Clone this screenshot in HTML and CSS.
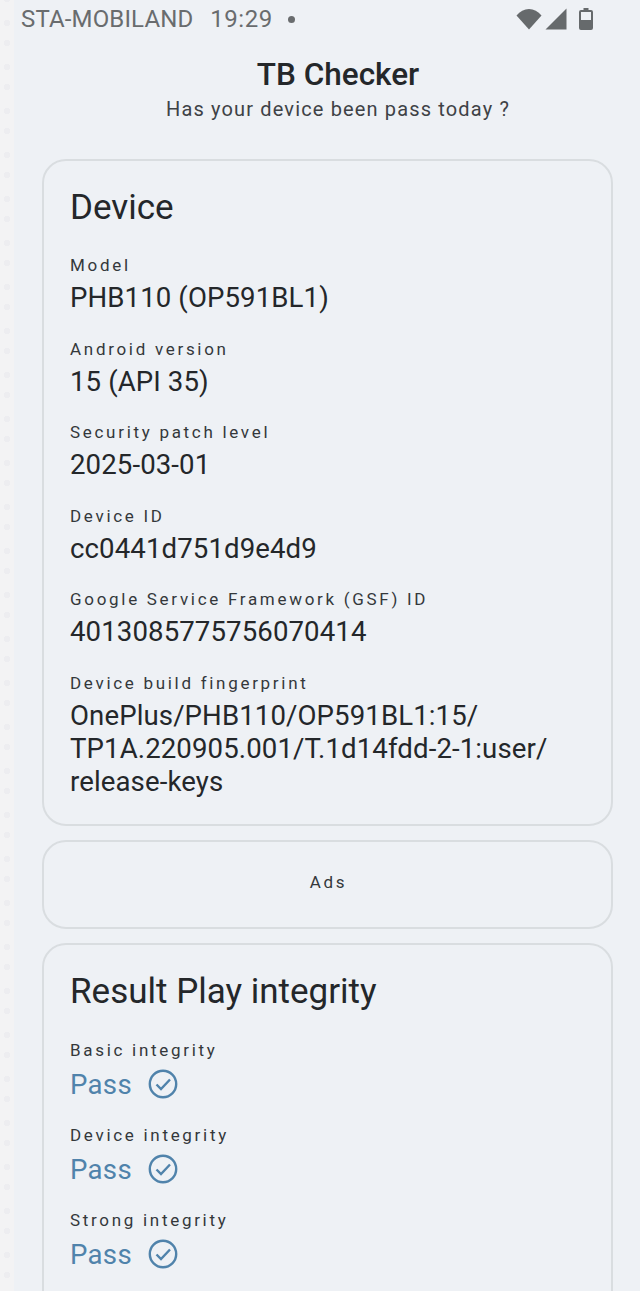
FILE: index.html
```html
<!DOCTYPE html>
<html lang="en">
<head>
<meta charset="utf-8">
<title>TB Checker</title>
<link rel="stylesheet" href="styles.css">
</head>
<body>
<div class="page">
  <div class="rail"></div>
  <main class="main">
    <header class="status">
      <div class="status-left">
        <span class="carrier">STA-MOBILAND</span>
        <span class="clock">19:29</span>
        <span class="dot"></span>
      </div>
      <div class="status-icons">
        <svg class="ic-wifi" viewBox="0 0 26 22"><path d="M13 21.5 0.5 7.5C4 3.2 8.2 1 13 1s9 2.2 12.5 6.500z"/></svg>
        <svg class="ic-signal" viewBox="0 0 22 22"><path d="M21.500 0.500V21.500H0.500z"/></svg>
        <svg class="ic-battery" viewBox="0 0 14 22"><path fill-rule="evenodd" d="M4.500 0h5v2H12a2 2 0 0 1 2 2v16a2 2 0 0 1-2 2H2a2 2 0 0 1-2-2V4a2 2 0 0 1 2-2h2.500zM2 4v8h10V4z"/></svg>
      </div>
    </header>

    <div class="heading">
      <h1 class="app-title">TB Checker</h1>
      <p class="app-sub">Has your device been pass today ?</p>
    </div>

    <section class="card card-device">
      <h2 class="card-title">Device</h2>
      <div class="field">
        <div class="label">Model</div>
        <div class="value">PHB110 (OP591BL1)</div>
      </div>
      <div class="field">
        <div class="label">Android version</div>
        <div class="value">15 (API 35)</div>
      </div>
      <div class="field">
        <div class="label">Security patch level</div>
        <div class="value">2025-03-01</div>
      </div>
      <div class="field">
        <div class="label">Device ID</div>
        <div class="value">cc0441d751d9e4d9</div>
      </div>
      <div class="field">
        <div class="label">Google Service Framework (GSF) ID</div>
        <div class="value">4013085775756070414</div>
      </div>
      <div class="field">
        <div class="label">Device build fingerprint</div>
        <div class="value">OnePlus/PHB110/OP591BL1:15/<br>TP1A.220905.001/T.1d14fdd-2-1:user/<br>release-keys</div>
      </div>
    </section>

    <section class="card card-ads">Ads</section>

    <section class="card card-result">
      <h2 class="card-title">Result Play integrity</h2>
      <div class="check">
        <div class="label">Basic integrity</div>
        <div class="pass">Pass
          <svg class="ic-check" viewBox="0 0 30 30"><circle cx="15" cy="15" r="13.200"/><path d="M8.500 15.500l4.500 4.500 9-9.500"/></svg>
        </div>
      </div>
      <div class="check">
        <div class="label">Device integrity</div>
        <div class="pass">Pass
          <svg class="ic-check" viewBox="0 0 30 30"><circle cx="15" cy="15" r="13.200"/><path d="M8.500 15.500l4.500 4.500 9-9.500"/></svg>
        </div>
      </div>
      <div class="check">
        <div class="label">Strong integrity</div>
        <div class="pass">Pass
          <svg class="ic-check" viewBox="0 0 30 30"><circle cx="15" cy="15" r="13.200"/><path d="M8.500 15.500l4.500 4.500 9-9.500"/></svg>
        </div>
      </div>
    </section>
  </main>
</div>
</body>
</html>
```

FILE: styles.css
```css
* {
  box-sizing: border-box;
}

html,
body {
  margin: 0;
  height: 100%;
}

body {
  font-family: Roboto, "Liberation Sans", sans-serif;
  background: #eef1f5;
  color: #24272a;
  overflow: hidden;
}

.page {
  display: flex;
  height: 1291px;
  overflow: hidden;
}

/* Pale strip along the left edge with its faint column of dots */
.rail {
  flex: 0 0 14px;
  background-color: #f3f3f4;
  background-image: radial-gradient(circle at 7px 3px, #ededf0 0 3px, transparent 3.500px),
    radial-gradient(circle at 7px 3px, #ededf0 0 3px, transparent 3.500px);
  background-size: 14px 44px;
  background-position: 0 20px, 0 40px;
  background-repeat: repeat-y;
}

.main {
  flex: 1;
  min-width: 0;
  padding: 0 27px 0 28px;
}

.status {
  display: flex;
  justify-content: space-between;
  align-items: center;
  height: 38px;
  margin-left: -21px;
  margin-right: -12px;
  color: #696c6e;
}

.status-left {
  display: flex;
  align-items: center;
}

.carrier {
  font-size: 24px;
  letter-spacing: 0.15px;
}

.clock {
  margin-left: 17px;
  font-size: 24px;
  font-weight: 450;
  letter-spacing: 0.5px;
}

.dot {
  width: 7px;
  height: 7px;
  margin-left: 15px;
  border-radius: 50%;
  background: #696c6e;
}

.status-icons {
  display: flex;
  align-items: center;
  gap: 3px;
  padding-right: 32px;
}

.status-icons svg {
  fill: #666a6c;
  display: block;
}

.ic-wifi {
  width: 26px;
  height: 22px;
}

.ic-signal {
  width: 22px;
  height: 22px;
  margin-right: 9px;
}

.ic-battery {
  width: 14px;
  height: 22px;
}

.heading {
  text-align: center;
  margin-left: 21px;
}

.app-title {
  margin: 17px 0 0;
  font-size: 31.500px;
  line-height: 39px;
  font-weight: 500;
}

.app-sub {
  margin: 0;
  font-size: 20px;
  line-height: 30px;
  letter-spacing: 1.150px;
  color: #3e4246;
}

.card {
  border: 2px solid #d9dde0;
  border-radius: 24px;
}

.card-device {
  height: 667px;
  margin-top: 35px;
  padding: 26px 26px 0;
}

.card-title {
  margin: 0;
  font-size: 35px;
  line-height: 42px;
  font-weight: 400;
}

.field {
  margin-top: 20px;
}

.field + .field {
  margin-top: 18.500px;
}

.label {
  font-size: 17px;
  line-height: 32px;
  letter-spacing: 2.700px;
  color: #34383b;
}

.value {
  font-size: 27.600px;
  line-height: 33px;
  letter-spacing: 0.100px;
}

.card-ads {
  display: flex;
  align-items: center;
  justify-content: center;
  height: 89px;
  margin-top: 14px;
  padding: 0 0 6px 2px;
  font-size: 17px;
  letter-spacing: 2.700px;
  color: #34383b;
}

.card-result {
  height: 420px;
  margin-top: 14px;
  padding: 26px 26px 0;
}

.check {
  margin-top: 17px;
}

.card-title + .check {
  margin-top: 21px;
}

.pass {
  display: flex;
  align-items: center;
  gap: 16px;
  height: 36px;
  font-size: 27.600px;
  letter-spacing: 0.300px;
  color: #5083ab;
}

.ic-check {
  width: 30px;
  height: 30px;
  fill: none;
  stroke: #5083ab;
  stroke-width: 2.400;
}
```
